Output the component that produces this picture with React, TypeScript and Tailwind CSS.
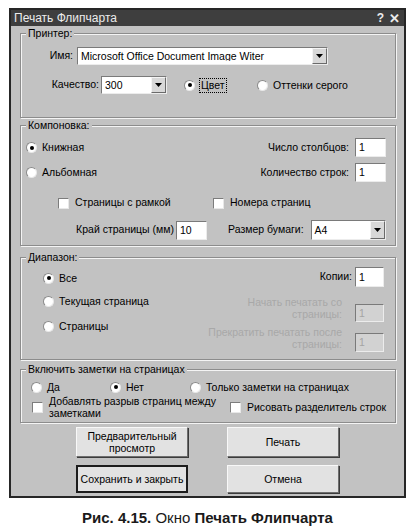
import React from "react";

const FONT = { fontFamily: '"Liberation Sans", Arial, sans-serif' };

const Radio = ({ label, checked, disabled, focus }: { label: string; checked?: boolean; disabled?: boolean; focus?: boolean }) => (
  <div className="flex items-center h-[14px]">
    <span className="relative w-[11px] h-[11px] rounded-full bg-white border border-t-[#8a8a8a] border-l-[#8a8a8a] border-r-[#e8e8e8] border-b-[#e8e8e8] flex items-center justify-center shrink-0">
      {checked && <span className="w-[4px] h-[4px] rounded-full bg-black" />}
    </span>
    <span
      className={
        "ml-[5px] leading-[13px] whitespace-nowrap " +
        (disabled ? "text-[#9c9c9c]" : "text-black") +
        (focus ? " outline outline-1 outline-dotted outline-black px-[1px]" : "")
      }
    >
      {label}
    </span>
  </div>
);

const Check = ({ children }: { children: React.ReactNode }) => (
  <div className="flex items-center">
    <span className="w-[11px] h-[11px] bg-white border border-t-[#7c7c7c] border-l-[#7c7c7c] border-r-[#e8e8e8] border-b-[#e8e8e8] shrink-0" />
    <span className="ml-[6px] leading-[11.5px] whitespace-nowrap">{children}</span>
  </div>
);

const Field = ({ value, w, h, disabled }: { value: string; w: string; h: string; disabled?: boolean }) => (
  <div
    className={
      w + " " + h +
      " border border-t-[#7a7a7a] border-l-[#7a7a7a] border-r-[#ececec] border-b-[#ececec] flex items-center pl-[3px] shrink-0 " +
      (disabled ? "bg-[#d2d2d2] text-[#a4a4a4]" : "bg-white text-black")
    }
  >
    <span className="leading-none">{value}</span>
  </div>
);

const Combo = ({ value, w, h }: { value: string; w: string; h: string }) => (
  <div
    className={
      w + " " + h +
      " bg-white border border-t-[#7a7a7a] border-l-[#7a7a7a] border-r-[#ececec] border-b-[#ececec] flex items-center shrink-0"
    }
  >
    <span className="flex-1 pl-[3px] whitespace-nowrap overflow-hidden leading-none">{value}</span>
    <span className="w-[15px] h-full bg-[#d8d8d8] border border-t-[#f4f4f4] border-l-[#f4f4f4] border-r-[#6a6a6a] border-b-[#6a6a6a] flex items-center justify-center">
      <svg width="7" height="4" viewBox="0 0 7 4">
        <path d="M0 0h7L3.5 4z" fill="#000" />
      </svg>
    </span>
  </div>
);

const Group = ({ title, className, children }: { title: string; className: string; children: React.ReactNode }) => (
  <div
    className={
      "relative ml-[9px] w-[376px] border border-[#8c8c8c] shadow-[1px_1px_0_#f4f4f4,inset_1px_1px_0_#f4f4f4] " +
      className
    }
  >
    <span className="absolute -top-[7px] left-[5px] px-[2px] bg-[#c2c2c2] leading-[13px] whitespace-nowrap">
      {title}
    </span>
    {children}
  </div>
);

const Btn = ({ children, def }: { children: React.ReactNode; def?: boolean }) => (
  <div
    className={
      "w-[112px] h-full flex items-center justify-center text-center leading-[12px] bg-[#e2e2e2] " +
      (def
        ? "border-2 border-[#1c1c1c]"
        : "border border-t-[#f8f8f8] border-l-[#f8f8f8] border-r-[#6e6e6e] border-b-[#6e6e6e] shadow-[1px_1px_0_#3c3c3c]")
    }
  >
    {children}
  </div>
);

export default function App() {
  return (
    <div className="w-[415px] h-[530px] bg-white overflow-hidden text-[10.5px] text-black" style={FONT}>
      <div className="ml-[9px] mt-[8px] w-[397px] h-[490px] border-2 border-[#262626] bg-[#c2c2c2]">
        {/* title bar */}
        <div className="h-[16px] bg-[#3e3e3e] flex items-center pl-[3px] pr-[4px] text-[#ececec]">
          <span className="text-[12px] leading-none">Печать Флипчарта</span>
          <span className="ml-auto text-[12px] font-bold leading-none">?</span>
          <span className="ml-[5px] text-[13px] font-bold leading-none">✕</span>
        </div>

        {/* Принтер */}
        <Group title="Принтер:" className="mt-[7px] h-[85px]">
          <div className="mt-[13px] flex items-center h-[18px]">
            <span className="w-[52px] text-right">Имя:</span>
            <div className="ml-[4px]">
              <Combo value="Microsoft Office Document Image Witer" w="w-[251px]" h="h-[18px]" />
            </div>
          </div>
          <div className="mt-[11px] flex items-center h-[18px]">
            <span className="w-[78px] text-right">Качество:</span>
            <div className="ml-[2px]">
              <Combo value="300" w="w-[66px]" h="h-[18px]" />
            </div>
            <div className="ml-[17px] w-[73px]">
              <Radio label="Цвет" checked focus />
            </div>
            <Radio label="Оттенки серого" />
          </div>
        </Group>

        {/* Компоновка */}
        <Group title="Компоновка:" className="mt-[7px] h-[121px]">
          <div className="mt-[12px] h-[19px] flex items-center pl-[5px] pr-[9px]">
            <Radio label="Книжная" checked />
            <span className="ml-auto">Число столбцов:</span>
            <div className="ml-[6px]">
              <Field value="1" w="w-[31px]" h="h-[19px]" />
            </div>
          </div>
          <div className="mt-[6px] h-[19px] flex items-center pl-[5px] pr-[9px]">
            <Radio label="Альбомная" />
            <span className="ml-auto">Количество строк:</span>
            <div className="ml-[6px]">
              <Field value="1" w="w-[31px]" h="h-[19px]" />
            </div>
          </div>
          <div className="mt-[14px] h-[14px] flex items-center pl-[37px]">
            <div className="w-[155px]">
              <Check>Страницы с рамкой</Check>
            </div>
            <Check>Номера страниц</Check>
          </div>
          <div className="mt-[10px] h-[20px] flex items-center">
            <span className="w-[153px] text-right">Край страницы (мм)</span>
            <div className="ml-[2px]">
              <Field value="10" w="w-[31px]" h="h-[19px]" />
            </div>
            <span className="ml-[21px]">Размер бумаги:</span>
            <div className="ml-[7px]">
              <Combo value="A4" w="w-[75px]" h="h-[20px]" />
            </div>
          </div>
        </Group>

        {/* Диапазон */}
        <Group title="Диапазон:" className="mt-[11px] h-[103px] flex">
          <div className="pl-[22px]">
            <div className="mt-[13px]">
              <Radio label="Все" checked />
            </div>
            <div className="mt-[9px]">
              <Radio label="Текущая страница" />
            </div>
            <div className="mt-[11px]">
              <Radio label="Страницы" />
            </div>
          </div>
          <div className="ml-auto pr-[11px]">
            <div className="mt-[9px] h-[20px] flex items-center justify-end">
              <span>Копии:</span>
              <div className="ml-[3px]">
                <Field value="1" w="w-[29px]" h="h-[20px]" />
              </div>
            </div>
            <div className="mt-[9px] flex items-start justify-end">
              <span className="text-right leading-[12px] text-[#a8a8a8]">
                Начать печатать со
                <br />
                страницы:
              </span>
              <div className="ml-[13px] mt-[8px]">
                <Field value="1" w="w-[29px]" h="h-[18px]" disabled />
              </div>
            </div>
            <div className="mt-[5px] flex items-start justify-end">
              <span className="text-right leading-[11.5px] text-[#a8a8a8]">
                Прекратить печатать после
                <br />
                страницы:
              </span>
              <div className="ml-[13px] mt-[6px]">
                <Field value="1" w="w-[29px]" h="h-[19px]" disabled />
              </div>
            </div>
          </div>
        </Group>

        {/* Заметки */}
        <Group title="Включить заметки на страницах" className="mt-[9px] h-[54px]">
          <div className="mt-[10px] flex items-center pl-[10px]">
            <div className="w-[79px]">
              <Radio label="Да" />
            </div>
            <div className="w-[80px]">
              <Radio label="Нет" checked />
            </div>
            <Radio label="Только заметки на страницах" />
          </div>
          <div className="mt-[2px] flex items-center pl-[11px]">
            <div className="w-[198px]">
              <Check>
                Добавлять разрыв страниц между
                <br />
                заметками
              </Check>
            </div>
            <Check>Рисовать разделитель строк</Check>
          </div>
        </Group>

        {/* buttons */}
        <div className="mt-[4px] h-[30px] flex ml-[65px] gap-[39px]">
          <Btn>
            Предварительный
            <br />
            просмотр
          </Btn>
          <Btn>Печать</Btn>
        </div>
        <div className="mt-[8px] h-[28px] flex ml-[65px] gap-[39px]">
          <Btn def>Сохранить и закрыть</Btn>
          <Btn>Отмена</Btn>
        </div>
      </div>

      <div className="mt-[10px] text-center text-[15px] leading-[19px] text-[#1a1a1a]">
        <span className="font-bold">Рис. 4.15.</span> Окно <span className="font-bold">Печать Флипчарта</span>
      </div>
    </div>
  );
}
